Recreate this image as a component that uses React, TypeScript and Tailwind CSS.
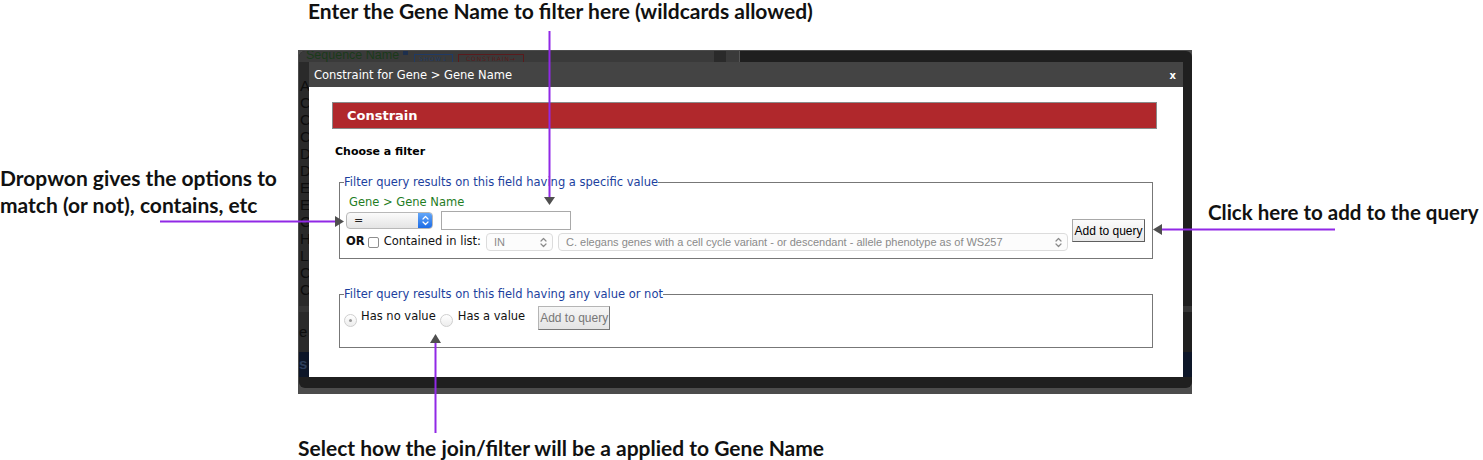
import React from "react";

const letters = ["A", "C", "C", "C", "D", "D", "E", "E", "G", "H", "L", "C", "C"];

function Chevrons({ color }: { color: string }) {
  return (
    <svg width="7" height="11" viewBox="0 0 7 11" fill="none">
      <path d="M1 4 L3.5 1.5 L6 4 M1 7 L3.5 9.5 L6 7" stroke={color} strokeWidth="1.2" strokeLinecap="round" strokeLinejoin="round" />
    </svg>
  );
}

function SideStrip({ withLetters }: { withLetters?: boolean }) {
  return (
    <div className="flex h-full flex-col overflow-hidden">
      <div className="h-[240px] pt-[15px] pl-[1px]">
        {withLetters &&
          letters.map((l, i) => (
            <div key={i} className="h-[17px] font-['Liberation_Sans',sans-serif] text-[15px] leading-[17px] text-[#0c0c0c]">
              {l}
            </div>
          ))}
      </div>
      <div className="mt-[4px] h-[6px] bg-[#353535]" />
      <div className="flex h-[40px] items-center font-['Liberation_Sans',sans-serif] text-[15px] text-[#0c0c0c]">
        {withLetters ? "e" : ""}
      </div>
      <div className="flex h-[25px] items-center bg-[#0d1628] font-['Liberation_Sans',sans-serif] text-[15px] font-bold text-[#2c3e5c]">
        {withLetters ? "s" : ""}
      </div>
    </div>
  );
}

function TopStrip() {
  return (
    <div className="flex h-[11px] overflow-hidden">
      <div className="flex w-[440px] bg-[#3a3a3a]">
        <div className="-mt-[4px] flex h-[16px] items-center">
          <span className="ml-[7px] w-[97px] shrink-0 overflow-hidden whitespace-nowrap font-['Liberation_Sans',sans-serif] text-[12.5px] leading-[16px] text-[#1a3a1a]">
            Sequence Name
          </span>
          <span className="mt-[-6px] h-[5px] w-[5px] bg-[#1d2f4d]" />
          <span className="ml-[6px] mt-[6px] flex h-[9px] w-[39px] items-center justify-center border border-[#1f3a66] font-['DejaVu_Sans',sans-serif] text-[6px] tracking-[1px] text-[#1f3a66]">
            SHOW↓
          </span>
          <span className="ml-[5px] mt-[6px] flex h-[9px] w-[66px] items-center justify-center border border-[#5a1a1c] font-['DejaVu_Sans',sans-serif] text-[6px] tracking-[1px] text-[#5a1a1c]">
            CONSTRAIN→
          </span>
        </div>
        <div className="ml-auto mr-[13px] w-[12px] bg-[#2a2a2a]" />
      </div>
      <div className="w-px bg-[#555555]" />
    </div>
  );
}

function Modal() {
  return (
    <div className="flex w-[874px] flex-col font-['DejaVu_Sans',sans-serif]">
      <div className="flex h-[25px] items-center justify-between bg-[#444444] pl-[5px] pr-[7px] pt-[2px] text-[11.5px] text-white">
        <span>Constraint for Gene &gt; Gene Name</span>
        <span className="text-[10px] font-bold">x</span>
      </div>
      <div className="h-[290px] bg-white pl-[23px] pr-[26px] pt-[15px]">
        <div className="flex h-[27px] items-center border border-[#8a8a8a] bg-[#b0282c] pl-[14px] text-[13px] font-bold text-white">
          Constrain
        </div>
        <p className="mt-[16px] pl-[3px] text-[11px] font-bold leading-[14px] text-black">Choose a filter</p>

        <fieldset className="ml-[7px] mr-[4px] mt-[16px] border border-[#777777] pb-[7px] pl-[4px] pr-[6px] pt-[6px]">
          <legend className="px-0 text-[11.5px] leading-[14px] text-[#1c3f9e]">
            Filter query results on this field having a specific value
          </legend>
          <div className="flex pl-[2px]">
            <div className="flex flex-col">
              <div className="ml-[3px] text-[11.5px] leading-[14px] text-[#1f7d1f]">Gene &gt; Gene Name</div>
              <div className="mt-[2px] flex h-[19px] items-center gap-[8px]">
                <div className="flex h-[17px] w-[87px] overflow-hidden rounded-[4px] border border-[#b8b8b8] bg-gradient-to-b from-[#fbfbfb] to-[#e4e4e4]">
                  <span className="flex-1 pl-[7px] text-[11px] leading-[15px] text-[#222]">=</span>
                  <span className="flex w-[14px] items-center justify-center bg-gradient-to-b from-[#62a6f8] to-[#1c6ce6]">
                    <Chevrons color="#ffffff" />
                  </span>
                </div>
                <input className="h-[19px] w-[130px] border border-[#a9a9a9] bg-white outline-none" />
              </div>
              <div className="mt-[3px] flex h-[18px] items-center text-[11.5px]">
                <span className="font-bold text-[#111]">OR</span>
                <span className="ml-[3px] h-[11px] w-[11px] rounded-[2px] border border-[#8e8e8e] bg-white" />
                <span className="ml-[5px] text-[#111]">Contained in list:</span>
                <div className="ml-[5px] flex h-[18px] w-[67px] items-center justify-between rounded-[4px] border border-[#dcdcdc] bg-[#fcfcfc] pl-[7px] pr-[5px] font-['Liberation_Sans',sans-serif] text-[11px] text-[#8a8a8a]">
                  <span>IN</span>
                  <Chevrons color="#8a8a8a" />
                </div>
                <div className="ml-[5px] flex h-[18px] w-[510px] items-center justify-between rounded-[4px] border border-[#dcdcdc] bg-[#fcfcfc] pl-[7px] pr-[5px] font-['Liberation_Sans',sans-serif] text-[11px] text-[#8a8a8a]">
                  <span className="whitespace-nowrap">
                    C. elegans genes with a cell cycle variant - or descendant - allele phenotype as of WS257
                  </span>
                  <Chevrons color="#8a8a8a" />
                </div>
              </div>
            </div>
            <button className="mb-[9px] ml-[4px] h-[23px] w-[73px] self-end border border-[#a8a8a8] border-b-[#5e5e5e] border-r-[#5e5e5e] bg-gradient-to-b from-[#fbfbfb] to-[#e9e9e9] font-['Liberation_Sans',sans-serif] text-[12px] text-black">
              Add to query
            </button>
          </div>
        </fieldset>

        <fieldset className="ml-[7px] mr-[4px] mt-[28px] border border-[#777777] pb-[17px] pl-[4px] pr-[6px] pt-[5px]">
          <legend className="px-0 text-[11.5px] leading-[14px] text-[#1c3f9e]">
            Filter query results on this field having any value or not
          </legend>
          <div className="flex items-start text-[11.5px] text-[#111]">
            <span className="mt-[8px] flex h-[13px] w-[13px] items-center justify-center rounded-full border border-[#cfcfcf] bg-gradient-to-b from-white to-[#ededed]">
              <span className="h-[3px] w-[3px] rounded-full bg-[#9a9a9a]" />
            </span>
            <span className="ml-[4px] mt-[3px] leading-[14px]">Has no value</span>
            <span className="ml-[4px] mt-[8px] h-[13px] w-[13px] rounded-full border border-[#cfcfcf] bg-gradient-to-b from-white to-[#ededed]" />
            <span className="ml-[5px] mt-[3px] leading-[14px]">Has a value</span>
            <button className="ml-[13px] h-[24px] w-[72px] border border-[#b5b5b5] border-b-[#777] border-r-[#777] bg-gradient-to-b from-[#f6f6f6] to-[#e4e4e4] font-['Liberation_Sans',sans-serif] text-[12px] text-[#777]">
              Add to query
            </button>
          </div>
        </fieldset>
      </div>
    </div>
  );
}

function Screenshot() {
  return (
    <div className="h-[344px] w-[894px] shrink-0 bg-[#4c4c4c] pl-[1px] pt-[1px]">
      <div className="flex h-[337px] flex-col overflow-hidden rounded-[6px] bg-[#1f1f1f]">
        <TopStrip />
        <div className="flex h-[315px]">
          <div className="w-[10px] bg-[#2a2a2a]">
            <SideStrip withLetters />
          </div>
          <Modal />
          <div className="flex-1">
            <SideStrip />
          </div>
        </div>
        <div className="h-[11px]" />
      </div>
    </div>
  );
}

function Arrows() {
  const purple = "#9129e6";
  const head = "#4f4f4f";
  return (
    <svg className="pointer-events-none absolute left-0 top-0" width="1483" height="460">
      <line x1="549.5" y1="31" x2="549.5" y2="198" stroke={purple} strokeWidth="2" />
      <polygon points="544,197 555,197 549.5,205" fill={head} />
      <line x1="160" y1="221.5" x2="336" y2="221.5" stroke={purple} strokeWidth="2" />
      <polygon points="335,216 335,227 344,221.5" fill={head} />
      <line x1="1161" y1="229.5" x2="1335" y2="229.5" stroke={purple} strokeWidth="2" />
      <polygon points="1162,224 1162,235 1153,229.5" fill={head} />
      <line x1="435.5" y1="342" x2="435.5" y2="433" stroke={purple} strokeWidth="2" />
      <polygon points="430,343 441,343 435.5,334" fill={head} />
    </svg>
  );
}

export default function App() {
  return (
    <div className="relative h-[460px] w-[1483px] overflow-hidden bg-white font-['Lato',sans-serif] text-[#111]">
      <div className="h-[50px] pl-[308px]">
        <p className="whitespace-nowrap text-[21px] font-bold leading-[21px]">Enter the Gene Name to filter here (wildcards allowed)</p>
      </div>
      <div className="flex h-[344px]">
        <div className="w-[298px] shrink-0 pt-[114px]">
          <p className="whitespace-nowrap text-[21px] font-bold leading-[27px]">
            Dropwon gives the options to
            <br />
            match (or not), contains, etc
          </p>
        </div>
        <Screenshot />
        <div className="pl-[16px] pt-[150px]">
          <p className="whitespace-nowrap text-[20.5px] font-bold leading-[24px]">Click here to add to the query</p>
        </div>
      </div>
      <div className="pl-[298px] pt-[42px]">
        <p className="whitespace-nowrap text-[21px] font-bold leading-[24px]">Select how the join/filter will be a applied to Gene Name</p>
      </div>
      <Arrows />
    </div>
  );
}
